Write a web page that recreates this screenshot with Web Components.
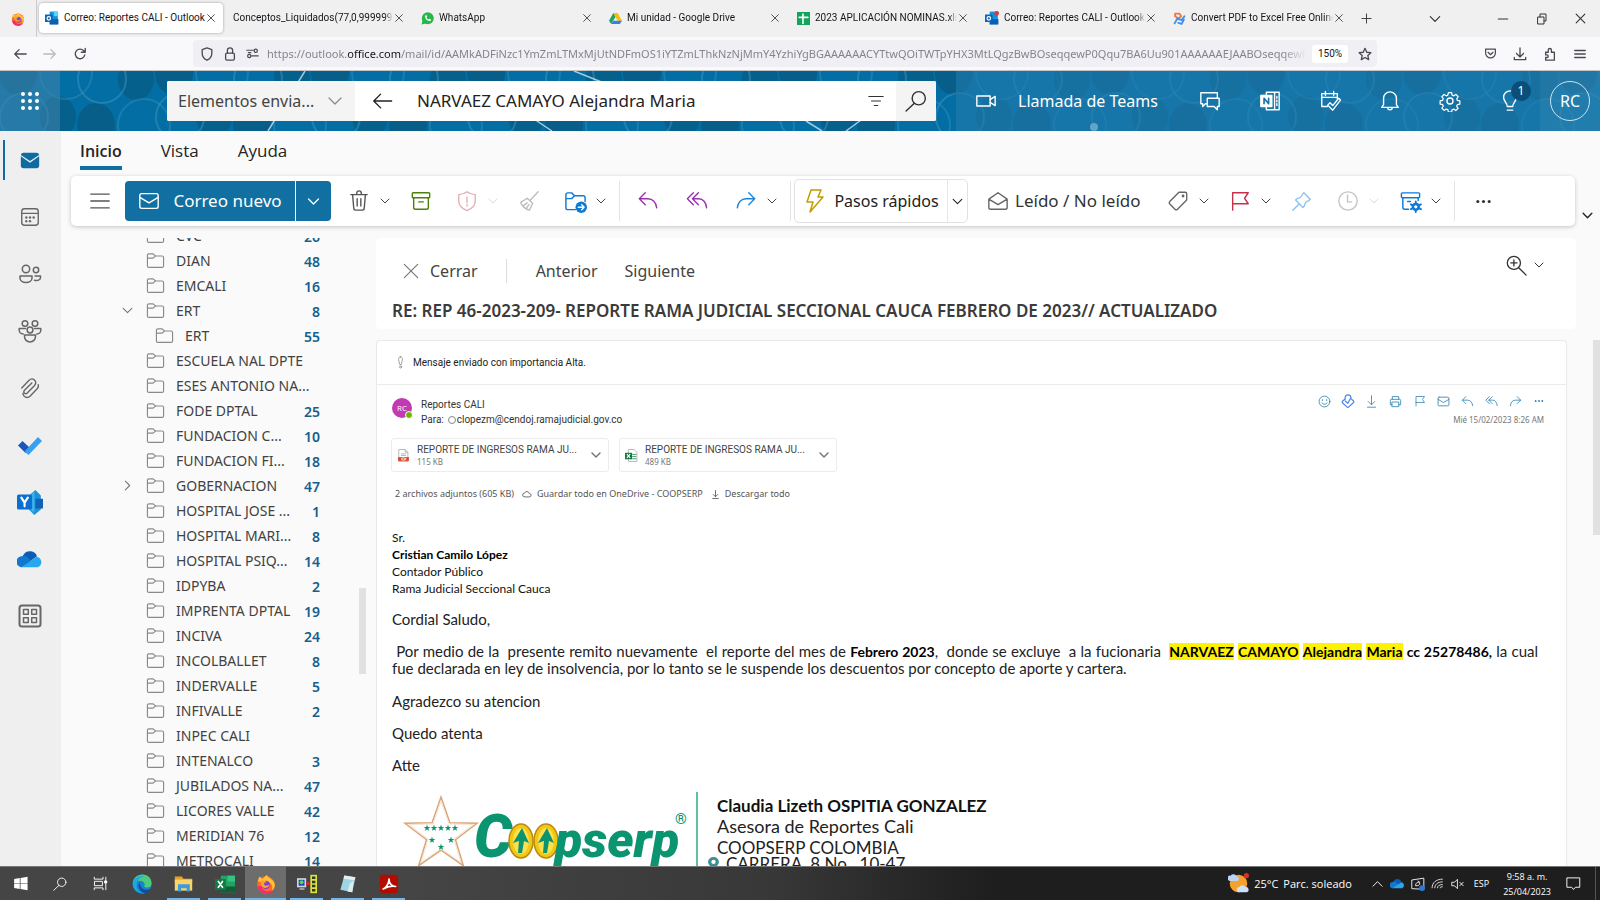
<!DOCTYPE html>
<html lang="es">
<head>
<meta charset="utf-8">
<title>Correo: Reportes CALI - Outlook</title>
<style>
  html, body { margin: 0; height: 100%; }
  body { font-family: "Noto Sans", "Open Sans", sans-serif; color: #242424; background: #fafafa; overflow: hidden; }
</style>
</head>
<body>
<desktop-shell>
  <browser-tabs slot="tabs"></browser-tabs>
  <browser-toolbar slot="toolbar"></browser-toolbar>
  <suite-header slot="header"></suite-header>
  <app-rail slot="rail"></app-rail>
  <ribbon-bar slot="ribbon"></ribbon-bar>
  <folder-tree slot="folders"></folder-tree>
  <reading-pane slot="reading">
    <mail-body></mail-body>
  </reading-pane>
  <task-bar slot="taskbar"></task-bar>
</desktop-shell>

<script>
const BASE = `*{box-sizing:border-box}
  button{font:inherit;color:inherit;background:none;border:0;padding:0;margin:0;display:flex;align-items:center;justify-content:center;flex:none}
  a{color:inherit;text-decoration:none}`;

function define(name, css, html) {
  const tpl = document.createElement('template');
  tpl.innerHTML = `<style>${BASE}${css}</style>${html}`;
  customElements.define(name, class extends HTMLElement {
    constructor() {
      super();
      this.attachShadow({ mode: 'open' }).append(tpl.content.cloneNode(true));
    }
  });
}

/* Icons: [viewBox, markup]. Strokes take the current colour. */
const ICONS = {
  close: ['0 0 12 12', '<path d="M2 2l8 8M10 2l-8 8"/>'],
  plus: ['0 0 12 12', '<path d="M6 1v10M1 6h10"/>'],
  down: ['0 0 12 12', '<path d="M2 4l4 4 4-4"/>'],
  right: ['0 0 12 12', '<path d="M4 2l4 4-4 4"/>'],
  up: ['0 0 12 12', '<path d="M1 9l5-5 5 5"/>'],
  min: ['0 0 12 12', '<path d="M2 6h8"/>'],
  restore: ['0 0 12 12', '<path d="M2 4h6v7H2zM4 4V1h6v7H8"/>'],
  back: ['0 0 16 16', '<path d="M15 8H2M7 3L2 8l5 5"/>'],
  fwdnav: ['0 0 16 16', '<path d="M1 8h13M9 3l5 5-5 5"/>'],
  reload: ['0 0 16 16', '<path d="M13.500 9a5.500 5.500 0 1 1-1.500-5l1.500 1.500M14 1.500v4.500h-4.500"/>'],
  shield: ['0 0 16 16', '<path d="M8 1l5.500 2v4c0 4-2.500 6.500-5.500 8-3-1.500-5.500-4-5.500-8V3z"/>'],
  lock: ['0 0 16 16', '<rect x="3" y="7" width="10" height="8" rx="1.500"/><path d="M5 7V4a3 3 0 0 1 6 0v3"/>'],
  perms: ['0 0 16 16', '<path d="M1 4h8M7 11h8M3 7h3"/><circle cx="12" cy="4.500" r="2"/><circle cx="4" cy="11" r="2"/>'],
  star: ['0 0 16 16', '<path d="M8 1.500l2 4.500 4.700.5-3.500 3.200 1 4.800L8 12l-4.200 2.500 1-4.800L1.300 6.500 6 6z"/>'],
  pocket: ['0 0 16 16', '<path d="M2 2.500h12v5a6 6 0 0 1-12 0zM5 6.500l3 3 3-3"/>'],
  download: ['0 0 16 16', '<path d="M8 1v10M4 7.500l4 4 4-4M1.500 12v2.500h13V12"/>'],
  downline: ['0 0 16 16', '<path d="M8 1v10.500M4 8l4 4 4-4M3 15h10"/>'],
  ext: ['0 0 16 16', '<path d="M3 6h3V3.500a1.800 1.800 0 0 1 3.600 0V6H13v9H3v-3h1.500a1.500 1.500 0 0 0 0-3H3z"/>'],
  menu: ['0 0 16 16', '<path d="M2 4h12M2 8h12M2 12h12"/>'],
  waffle: ['0 0 20 20', '<g fill="currentColor" stroke="none"><circle cx="3" cy="3" r="2"/><circle cx="10" cy="3" r="2"/><circle cx="17" cy="3" r="2"/><circle cx="3" cy="10" r="2"/><circle cx="10" cy="10" r="2"/><circle cx="17" cy="10" r="2"/><circle cx="3" cy="17" r="2"/><circle cx="10" cy="17" r="2"/><circle cx="17" cy="17" r="2"/></g>'],
  filter: ['0 0 20 20', '<path d="M2 5h16M5 10h10M8 15h4"/>'],
  search: ['0 0 20 20', '<circle cx="12.500" cy="7.500" r="6"/><path d="M8.500 12L1 19"/>'],
  video: ['0 0 24 24', '<rect x="2" y="6.500" width="14.500" height="11"/><path d="M16.500 10.500L22 7v10l-5.500-3.500"/>'],
  chats: ['0 0 24 24', '<path d="M9 15H7l-3 3v-3H2V3h18v6"/><path d="M9 9h13v9h-2v3.500L16.500 18H9z"/>'],
  onenote: ['0 0 24 24', '<path d="M8 6V2.500h14v19H8V18M17 2.500v19M19.500 7v2M19.500 11v2M19.500 15v2"/><rect x="2" y="6" width="12" height="12" fill="currentColor"/><path d="M5.500 15V9l5 6V9" stroke="#1c73a5" stroke-width="1.800"/>'],
  calcheck: ['0 0 24 24', '<path d="M9 18H3V4h17v6M3 8h17M7 1.500V6M16 1.500V6M9.500 16.500l2.500-2.500 3 3 6.500-8 2 2L15 22z"/>'],
  bell: ['0 0 24 24', '<path d="M3 19h18l-2-3V9a7 7 0 0 0-14 0v7zM9.500 19a2.500 2.500 0 0 0 5 0"/>'],
  gear: ['0 0 24 24', '<circle cx="12" cy="12" r="3.300"/><path d="M10 2h4l.6 3 2 .9 2.700-1.700 2.700 2.800-1.700 2.600.8 2 3 .6v3.900l-3 .5-.9 2 1.700 2.600-2.800 2.700-2.500-1.700-2 .8-.6 2.900h-4l-.6-3-2-.8-2.500 1.700-2.800-2.700 1.700-2.600-.9-2-3-.5v-3.900l3-.6.9-2L2 7l2.700-2.800L7.400 5.900l2-.9z" transform="translate(1.300 1.100) scale(.89)"/>'],
  bulb: ['0 0 24 24', '<path d="M9 18c0-4-4-5.500-4-10a7 7 0 0 1 14 0c0 4.500-4 6-4 10zM9 22h6"/>'],
  mailfill: ['0 0 24 24', '<path d="M2 8l10 7 10-7v10a3 3 0 0 1-3 3H5a3 3 0 0 1-3-3z" fill="currentColor" stroke="none"/><path d="M2 6.500A3 3 0 0 1 5 4h14a3 3 0 0 1 3 2.500L12 13z" fill="currentColor" stroke="none"/>'],
  mail: ['0 0 24 24', '<rect x="2" y="4" width="20" height="16" rx="2"/><path d="M2 8l10 6 10-6"/>'],
  mailopen: ['0 0 24 24', '<path d="M2 10l10-7 10 7v9a2 2 0 0 1-2 2H4a2 2 0 0 1-2-2zM2 10l10 6 10-6"/>'],
  calendar: ['0 0 24 24', '<rect x="3" y="3" width="18" height="18" rx="3"/><path d="M3 8h18"/><g fill="currentColor" stroke="none"><circle cx="8" cy="12.500" r="1.300"/><circle cx="12" cy="12.500" r="1.300"/><circle cx="16" cy="12.500" r="1.300"/><circle cx="8" cy="16.500" r="1.300"/><circle cx="12" cy="16.500" r="1.300"/></g>'],
  people: ['0 0 24 24', '<circle cx="8" cy="7" r="3.700"/><circle cx="18" cy="8" r="2.700"/><path d="M2 14h12v2c0 3-3 4.500-6 4.500S2 19 2 16zM17 14h5.500v1.500c0 2.500-3 3.500-6 2.800"/>'],
  group: ['0 0 24 24', '<circle cx="7" cy="4.500" r="2.800"/><circle cx="17" cy="4.500" r="2.800"/><circle cx="12" cy="11" r="2.900"/><path d="M6.500 16h11v1.500a5.500 5.500 0 0 1-11 0zM7.500 9.500H1.200V11c0 2 1.500 4 4 4M16.500 9.500h6.300V11c0 2-1.500 4-4 4"/>'],
  clip: ['0 0 24 24', '<path d="M3 12l8-8.500c4-3.800 9.500 1.500 6 5.700L9 17.500c-2 2-5-.5-3-3l8-8M21 8.500c.5 2-.2 3.300-1.200 4.400L12 21c-3 2.800-7.500.5-7.800-3"/>'],
  todo: ['0 0 24 24', '<g stroke="none"><path d="M0 12.500l4.500-4.500 7 6.500-4 5.500z" fill="#1a56be"/><path d="M6.500 18.500L20 4l4 4L10.500 22z" fill="#38a0f2"/></g>'],
  yammer: ['0 0 24 24', '<g stroke="none"><path d="M11 6l6-5 5 5v13l-6 5-5-5z" fill="#1b93d8"/><path d="M17 9h7v9h-7z" fill="#0f62b5"/><path d="M12 6l4-4v20l-4-3z" fill="#41b4ea"/><rect x="0" y="5" width="14" height="14" rx="1.500" fill="#0a6fd0"/></g><path d="M4 8l3 4.500L10 8M7 12.500V16" stroke="#fff" stroke-width="2"/>'],
  onedrive: ['0 0 24 24', '<g stroke="none"><path d="M6 8a7 7 0 0 1 12.500 1.500L12 14 3 13z" fill="#0a5cb4"/><path d="M5 9.500a5 5 0 0 1 5 1L16 16l-12 3.500A5 5 0 0 1 5 9.500z" fill="#1277cf"/><path d="M4 19.500L18 10a5 5 0 0 1 1.500 9.500z" fill="#2aa6ec"/></g>'],
  apps: ['0 0 24 24', '<rect x="1.500" y="1.500" width="21" height="21" rx="2.500" stroke-width="2"/><rect x="5.500" y="5.500" width="4.800" height="4.800"/><rect x="13.700" y="5.500" width="4.800" height="4.800"/><rect x="5.500" y="13.700" width="4.800" height="4.800"/><rect x="13.700" y="13.700" width="4.800" height="4.800"/>'],
  lines: ['0 0 24 24', '<path d="M2 4.500h20M2 12h20M2 19.500h20"/>'],
  trash: ['0 0 24 24', '<path d="M3 5h18M9.500 5V3.500a2.500 2.500 0 0 1 5 0V5M5 5l1.300 15a2 2 0 0 0 2 2h7.400a2 2 0 0 0 2-2L19 5M10 9.500v8M14 9.500v8"/>'],
  archive: ['0 0 24 24', '<rect x="2.500" y="3" width="19" height="5.500" rx="1"/><path d="M4 8.500V19a2 2 0 0 0 2 2h12a2 2 0 0 0 2-2V8.500M9.500 13h5"/>'],
  report: ['0 0 24 24', '<path d="M12 2c2.500 2 5.500 3 9 3v7c0 5-4 8.500-9 10.500C7 20.500 3 17 3 12V5c3.500 0 6.500-1 9-3zM12 7.500v6.500M12 16v1.500"/>'],
  broom: ['0 0 24 24', '<path d="M22 2l-8.500 9M10 9l6 5.500-3.500 7.500C8 21 3.500 17 3 13.500zM6 17l4-3M9 20l3-4"/>'],
  move: ['0 0 24 24', '<path d="M12 20.500H4a2 2 0 0 1-2-2V5a2 2 0 0 1 2-2h4l3 3h9a2 2 0 0 1 2 2v4M2 9h6l3-3"/><circle cx="18" cy="18" r="6" fill="currentColor" stroke="none"/><path d="M15 18h6M18.500 15.500L21 18l-2.500 2.500" stroke="#fff"/>'],
  reply: ['0 0 24 24', '<path d="M9 3L2.500 9.500 9 16M2.500 9.500H12c5 0 9 4 9.500 10"/>'],
  replyall: ['0 0 24 24', '<path d="M8 3L1.500 9.500 8 16M13.500 3L7 9.500l6.500 6.500M7 9.500h7c4.500 0 8 4 8.500 10"/>'],
  forward: ['0 0 24 24', '<path d="M15 3l6.500 6.500L15 16M21.500 9.500H12c-5 0-9 4-9.500 10"/>'],
  bolt: ['0 0 24 24', '<path d="M8 1h10l-3 7h5L7 23l3-10H4z"/>'],
  tag: ['0 0 24 24', '<path d="M13 2.500h7a1.500 1.500 0 0 1 1.500 1.500v7L11.500 21a2 2 0 0 1-2.800 0L3 15.300a2 2 0 0 1 0-2.800z"/><circle cx="17.500" cy="6.500" r=".8" fill="currentColor"/>'],
  flag: ['0 0 24 24', '<path d="M4 22V3h17l-4 6 4 6H4"/>'],
  pin: ['0 0 24 24', '<path d="M14 3l7 7-1.500 1.500c-4 1.500-4 2.500-5 6l-1.500 1.500-8-8 1.500-1.500c3.500-1 5-1.500 6-5zM8.500 15.500L2 22"/>'],
  clock: ['0 0 24 24', '<circle cx="12" cy="12" r="10"/><path d="M11.500 5.500V13H16"/>'],
  rules: ['0 0 24 24', '<rect x="2.500" y="3" width="19" height="5" rx="1"/><path d="M4 8v10a2 2 0 0 0 2 2h4M20 8v3M9 12h3"/><circle cx="17.500" cy="17.500" r="3" stroke-width="2.600"/><path d="M17.500 12v2M17.500 21v2M12.500 15l1.500 1M21 19l1.800 1M12.500 20l1.500-1M21 16l1.800-1" stroke-width="2"/>'],
  dots: ['0 0 24 24', '<g fill="currentColor" stroke="none"><circle cx="4" cy="12" r="2.200"/><circle cx="12" cy="12" r="2.200"/><circle cx="20" cy="12" r="2.200"/></g>'],
  zoomin: ['0 0 24 24', '<circle cx="9" cy="9" r="7.500"/><path d="M14.500 14.500L23 23M9 5.500v7M5.500 9h7"/>'],
  folder: ['0 0 20 20', '<path d="M1.500 4.500A1.500 1.500 0 0 1 3 3h4.500L10 5.300h7A1.500 1.500 0 0 1 18.500 6.800v9A1.500 1.500 0 0 1 17 17.300H3a1.500 1.500 0 0 1-1.500-1.500zM1.500 7.500h6L10 5.300"/>'],
  important: ['0 0 12 16', '<path d="M6 1c-4 0-2 5-1 9.500h2C8 6 10 1 6 1z"/><circle cx="6" cy="13.500" r="1.200"/>'],
  smile: ['0 0 24 24', '<circle cx="12" cy="12" r="10"/><path d="M8 8.500v2M16 8.500v2M7 14.500c2 3.500 8 3.500 10 0"/>'],
  loop: ['0 0 24 24', '<path d="M7 9.500V6.500a5 5 0 0 1 10 0l-5.500 9.500-4-4M7 8.500l-4.500 4a2 2 0 0 0 0 2.500l8 7.500a2 2 0 0 0 2.500 0l8.500-8a2 2 0 0 0 0-2.500L17 8"/>'],
  print: ['0 0 24 24', '<path d="M6 8V3h12v5M6 18H2.500V10a2 2 0 0 1 2-2h15a2 2 0 0 1 2 2v8H18"/><rect x="6" y="13" width="12" height="8.500"/>'],
  cloud: ['0 0 24 24', '<path d="M6 19a4.500 4.500 0 0 1 0-9 6 6 0 0 1 11.500 1A4 4 0 0 1 18 19z"/>'],
  pdf: ['0 0 24 24', '<path d="M4 1h11l5 5v17H4z" fill="#fff" stroke="#aaa"/><path d="M15 1v5h5M8 9h8M8 12h8" stroke="#aaa"/><path d="M2 15h20v7H2z" fill="#d8492b" stroke="none"/><ellipse cx="12" cy="18.500" rx="4" ry="2" stroke="#fff"/>'],
  xlsx: ['0 0 24 24', '<path d="M7 1h10l5 5v17H7z" fill="#fff" stroke="#aaa"/><path d="M14 10h6M14 14h6M14 18h6" stroke="#1f8a50"/><rect x="0" y="7" width="13" height="12" fill="#107c41" stroke="none"/><path d="M4 10l5 6M9 10l-5 6" stroke="#fff" stroke-width="2"/>'],
  outlook: ['0 0 24 24', '<g stroke="none"><path d="M8 1h14v22H8z" fill="#1490df"/><path d="M15 1h7v8h-7z" fill="#50d9ff"/><path d="M8 14h15v9H8z" fill="#0a5fae"/><rect x="0" y="6" width="13" height="13" rx="1" fill="#0f64b8"/></g><circle cx="6.500" cy="12.500" r="3" stroke="#fff" stroke-width="2"/>'],
  outlooknew: ['0 0 24 24', '<g stroke="none"><path d="M8 1h14v22H8z" fill="#1490df"/><path d="M8 14h15v9H8z" fill="#0a5fae"/><rect x="0" y="6" width="13" height="13" rx="1" fill="#0f64b8"/><circle cx="20" cy="4" r="4" fill="#e0353f"/></g><circle cx="6.500" cy="12.500" r="3" stroke="#fff" stroke-width="2"/>'],
  whatsapp: ['0 0 24 24', '<circle cx="12.500" cy="11.500" r="11" fill="#25b846" stroke="none"/><path d="M1 23l2-8 6 6z" fill="#25b846" stroke="none"/><path d="M7.500 7c0 6 4 10 10 10l1-3-3-1.500-1.500 1.500c-2-.8-3-2-4-4l1.500-1.500L10 5.500z" fill="#fff" stroke="none"/>'],
  drive: ['0 0 24 24', '<g stroke="none"><path d="M8 2h8l8 14h-8z" fill="#fbbc04"/><path d="M8 2l4 7L4 22l-4-6z" fill="#1fa463"/><path d="M8 16h16l-4 6H4z" fill="#3c7bec"/></g>'],
  sheets: ['0 0 24 24', '<rect x="0" y="0" width="24" height="24" fill="#12a35c" stroke="none"/><path d="M4 10h16M11 4v17" stroke="#fff" stroke-width="3"/>'],
  pdfconv: ['0 0 24 24', '<g stroke-width="3.500"><path d="M4 8V3h8l3 5-5 4-6-4" stroke="#f2763f"/><path d="M3 21l5-9 8 3 5-7M10 20l6 2 4-8" stroke="#4590e8"/></g>'],
  firefox: ['0 0 24 24', '<g stroke="none"><circle cx="12" cy="13" r="10.500" fill="#ff6a2b"/><path d="M2 9l2-6 4 3 5-5c1 4 8 5 9.500 11a10 10 0 0 1-4 9c3-6 0-10-4-11z" fill="#ffc42e"/><path d="M2 15a10 10 0 0 0 19 3c-3 4-14 4-14-4z" fill="#f0306b"/><circle cx="12" cy="13" r="5" fill="#7b3ee0"/><path d="M5 9c3-3 6-1 8 1-3 0-4 1-3 3s5 1 6-1c1 5-8 7-10 1z" fill="#ffa02b"/></g>'],
  windows: ['0 0 24 24', '<path d="M3 5.500l8-1.200V11.500H3zM12 4.200L22 2.500v9H12zM3 12.500h8v7.200l-8-1.200zM12 12.500h10v9l-10-1.700z" fill="#fff" stroke="none"/>'],
  taskview: ['0 0 24 24', '<path d="M2 2v3h14V2M3 8.500h12v7H3zM2 22v-3h14v3M20.500 2v20"/><path d="M19 8h3v3h-3z" fill="currentColor"/>'],
  edge: ['0 0 24 24', '<g stroke="none"><circle cx="12" cy="12" r="11.500" fill="#1b7fd4"/><path d="M1 10C3-3 24-3 23.500 12c-.5 5-7 5-9 3 2-3 0-7-5-7-4 0-7 1-8.500 2z" fill="#4ccb7c"/><path d="M1 10c2-6 9-9 15-7-5 0-9 3-10 8-2 6 3 13 10 12A12 12 0 0 1 1 10z" fill="#1ea9dc"/><path d="M9 10c-3 4 0 12 7 13 3-1 5-3 6-5-4 2-10 1-12-4z" fill="#0d4f9c"/></g>'],
  explorer: ['0 0 24 24', '<g stroke="none"><path d="M1 3h9l2 3h11v5H1z" fill="#e6a023"/><path d="M1 7h22v14H1z" fill="#fbd469"/><path d="M5 13h15v9h-4v-4H9v4H5z" fill="#3b9be0"/></g>'],
  excel: ['0 0 24 24', '<g stroke="none"><path d="M7 2h17v20H7z" fill="#21a366"/><path d="M15 2h9v7h-9z" fill="#33c481"/><path d="M7 15h17v7H7z" fill="#185c37"/><rect x="0" y="6" width="13" height="13" fill="#107c41"/></g><path d="M4 9l5 7M9 9l-5 7" stroke="#fff" stroke-width="2"/>'],
  transfer: ['0 0 24 24', '<g stroke="none"><rect x="0" y="5" width="11" height="11" fill="#d6d6d6"/><rect x="2" y="7" width="7" height="7" fill="#1b33c8"/><circle cx="5.500" cy="10" r="2.500" fill="#3ee04a"/><rect x="3" y="17" width="6" height="2" fill="#aaa"/><path d="M11 10h4v3h-4z" fill="#e22"/><rect x="16" y="1" width="8" height="22" fill="#dfe23c"/><path d="M18 3h4v3h-4zM18 8h4v3h-4zM18 13h4v3h-4zM18 18h4v3h-4z" fill="#2b3b14"/></g>'],
  notepad: ['0 0 24 24', '<g stroke="none"><path d="M8 2l14 2-4 19L3 20z" fill="#9ed4e3"/><path d="M8 2l14 2-1 4L7 6z" fill="#e4eef1"/><path d="M15 12l5-4-2 15-6-1z" fill="#dcebf0"/></g>'],
  acrobat: ['0 0 24 24', '<rect x="1" y="1" width="22" height="22" rx="4" fill="#b30b00" stroke="none"/><path d="M5 18c3-1 7-6 7-12 0 6 4 9 8 9-5-1-10 0-15 3z" stroke="#fff" stroke-width="2"/>'],
  weather: ['0 0 24 24', '<g stroke="none"><circle cx="12" cy="12" r="10" fill="#f5a22d"/><path d="M2 9a3 3 0 0 1 1-6 4 4 0 0 1 7 1 2.500 2.500 0 0 1 0 5z" fill="#bcd3f5"/><path d="M13 22a3 3 0 0 1 0-6 4 4 0 0 1 7 0 3 3 0 0 1 1 6z" fill="#cfdff8"/><circle cx="21" cy="3" r="3" fill="#d0332b"/></g>'],
  sync: ['0 0 24 24', '<path d="M2 5l20-3v19L2 20zM8 15c-1-4 2-6 7-6l-3-2M15 11c0 3-2 4-6 4"/><circle cx="19" cy="19" r="5" fill="#2d7ad6" stroke="none"/>'],
  wifi: ['0 0 24 24', '<path d="M2 20C2 10 10 4 21 4M7 20c0-6 5-11 14-11M12 20c0-4 3-6 9-6M17 20c0-2 2-2 4-2"/>'],
  mute: ['0 0 24 24', '<path d="M2 9h4l5-5v16l-5-5H2zM15 9l6 6M21 9l-6 6"/>'],
  note: ['0 0 24 24', '<path d="M2 3h20v15h-7l-3 3.500L9 18H2z"/>'],
  place: ['0 0 24 24', '<path d="M12 24C6 17 2 13 2 9a10 9 0 0 1 20 0c0 4-4 8-10 15z" fill="#3b8f95" stroke="none"/><circle cx="12" cy="9" r="4" fill="#fff" stroke="none"/>']
};

class UiIcon extends HTMLElement {
  constructor() { super(); this.attachShadow({ mode: 'open' }); }
  connectedCallback() {
    const [box, art] = ICONS[this.getAttribute('name')];
    const size = this.getAttribute('size') || 24;
    const sw = this.getAttribute('weight') || 1.5;
    this.shadowRoot.innerHTML = `<style>:host{display:block;flex:none;width:${size}px;height:${size}px}svg{display:block;width:100%;height:100%}</style><svg viewBox="${box}" fill="none" stroke="currentColor" stroke-width="${sw}" stroke-linejoin="round" stroke-linecap="round" aria-hidden="true">${art}</svg>`;
  }
}
customElements.define('ui-icon', UiIcon);

const ic = (name, size, weight) => `<ui-icon name="${name}" size="${size}"${weight ? ` weight="${weight}"` : ''}></ui-icon>`;

/* Browser chrome */
define('browser-tab', `
  :host{display:flex;flex:0 1 188px;min-width:0;padding:3px 2px 4px}
  .tab{display:flex;align-items:center;flex:1;min-width:0;border-radius:4px;padding:0 6px}
  :host([active]) .tab{background:#fff;box-shadow:0 0 3px rgba(0,0,0,.35)}
  button.pick{flex:1;min-width:0;gap:5px;justify-content:flex-start;height:100%;overflow:hidden;
    -webkit-mask-image:linear-gradient(90deg,#000 calc(100% - 8px),transparent);mask-image:linear-gradient(90deg,#000 calc(100% - 8px),transparent)}
  :host([active]) button.pick{-webkit-mask-image:none;mask-image:none}
  .label{white-space:nowrap;font:10px/14px Roboto,sans-serif;color:#15141a}
  .close{width:12px}`,
  `<div class="tab"><button class="pick" role="tab"><slot name="icon"></slot><span class="label"><slot></slot></span></button><button class="close" aria-label="Cerrar pestaña">${ic('close', 10, 1)}</button></div>`);

define('browser-tabs', `
  :host{display:flex;height:37px;background:#f0f0f0;color:#333;align-items:stretch}
  .app{width:37px;display:flex;align-items:center;justify-content:center;border-right:1px solid #ccc}
  .tabs{display:flex;flex:1;min-width:0}
  .ctl{display:flex}.ctl button{width:39px}
  .new{width:26px}.all{width:40px;margin-right:29px}`,
  `<div class="app">${ic('firefox', 14)}</div>
  <div class="tabs" role="tablist">
    <browser-tab active><ui-icon slot="icon" name="outlook" size="14"></ui-icon>Correo: Reportes CALI - Outlook</browser-tab>
    <browser-tab>Conceptos_Liquidados(77,0,9999999999)</browser-tab>
    <browser-tab><ui-icon slot="icon" name="whatsapp" size="13"></ui-icon>WhatsApp</browser-tab>
    <browser-tab><ui-icon slot="icon" name="drive" size="13"></ui-icon>Mi unidad - Google Drive</browser-tab>
    <browser-tab><ui-icon slot="icon" name="sheets" size="13"></ui-icon>2023 APLICACIÓN NOMINAS.xlsx</browser-tab>
    <browser-tab><ui-icon slot="icon" name="outlooknew" size="14"></ui-icon>Correo: Reportes CALI - Outlook</browser-tab>
    <browser-tab><ui-icon slot="icon" name="pdfconv" size="13"></ui-icon>Convert PDF to Excel Free Online</browser-tab>
    <button class="new" aria-label="Nueva pestaña">${ic('plus', 11, 1)}</button>
  </div>
  <div class="ctl"><button class="all" aria-label="Pestañas">${ic('down', 14, 1)}</button><button aria-label="Minimizar">${ic('min', 14, 1)}</button><button aria-label="Restaurar">${ic('restore', 12, 1)}</button><button aria-label="Cerrar">${ic('close', 13, 1)}</button></div>`);

define('browser-toolbar', `
  :host{display:flex;align-items:center;height:33px;background:#f9f9fb;border-bottom:1px solid #c4c4c8;color:#4a4a52;padding-right:5px}
  .nav{display:flex;padding-left:5px;width:193px}.nav button{width:30px}
  .nav .off{color:#b9b9be}
  .url{flex:1;min-width:0;height:27px;background:#f0f0f4;border-radius:4px;display:flex;align-items:center;padding:0 1px 0 2px}
  .url button{width:23px}
  .text{flex:1;min-width:0;margin-left:3px;font:11px/16px "Noto Sans",sans-serif;color:#84848c;white-space:nowrap;overflow:hidden;
    -webkit-mask-image:linear-gradient(90deg,#000 calc(100% - 24px),transparent);mask-image:linear-gradient(90deg,#000 calc(100% - 24px),transparent)}
  .text b{font-weight:400;color:#15141a}
  .url .zoom{width:36px;height:18px;background:#fff;border-radius:3px;margin:0 5px 0 6px;font:10px/18px Roboto,sans-serif;color:#15141a}
  .tools{display:flex;margin-left:98px}.tools button{width:30px}`,
  `<div class="nav"><button aria-label="Atrás">${ic('back', 14)}</button><button class="off" aria-label="Adelante">${ic('fwdnav', 14)}</button><button aria-label="Recargar">${ic('reload', 14)}</button></div>
  <div class="url"><button aria-label="Protección">${ic('shield', 14)}</button><button aria-label="Conexión segura">${ic('lock', 14)}</button><button aria-label="Permisos">${ic('perms', 13)}</button>
  <div class="text" role="textbox" aria-label="Dirección">https://outlook.<b>office.com</b>/mail/id/AAMkADFiNzc1YmZmLTMxMjUtNDFmOS1iYTZmLThkNzNjMmY4YzhiYgBGAAAAAACYTtwQOiTWTpYHX3MtLQgzBwBOseqqewP0Qqu7BA6Uu901AAAAAAEJAABOseqqewP0Qqu7BA6Uu901</div>
  <button class="zoom">150%</button><button aria-label="Marcador">${ic('star', 14)}</button></div>
  <div class="tools"><button aria-label="Pocket">${ic('pocket', 13)}</button><button aria-label="Descargas">${ic('download', 14)}</button><button aria-label="Extensiones">${ic('ext', 14)}</button><button aria-label="Menú">${ic('menu', 14)}</button></div>`);

/* Outlook top bar */
const rings = (() => {
  let s = '';
  for (let i = 0; i < 21; i++) {
    const x = i * 78, a = i % 2 ? 8 : 46, b = i % 2 ? 54 : 2;
    s += `<ellipse cx="${x + 18}" cy="${b}" rx="19" ry="22" fill="#075a82" opacity=".8"/><ellipse cx="${x + 58}" cy="${a}" rx="18" ry="21" fill="#075a82" opacity=".7"/>
      <circle cx="${x + 24}" cy="${a}" r="24" stroke="#3f93c0" opacity=".5" fill="none" stroke-width="2"/><circle cx="${x + 66}" cy="${b}" r="26" stroke="#3f93c0" opacity=".4" fill="none" stroke-width="2"/>`;
  }
  return s;
})();
define('suite-header', `
  :host{display:flex;height:60px;position:relative;background:#036ea3;color:#fff;font-size:16px;overflow:hidden}
  .art{position:absolute;inset:0;width:100%;height:100%}
  .waffle,.search,.actions{position:relative}
  .waffle{width:60px;background:rgba(60,130,170,.6)}
  .search{display:flex;flex:1;max-width:769px;height:40px;margin:10px 20px 0 107px;background:#fff;color:#333;border-radius:2px;overflow:hidden}
  .scope{width:188px;background:#f4f4f4;padding:0 11px;justify-content:space-between;color:#444}
  .scope ui-icon{color:#888}
  .back{width:54px;color:#222}
  input{flex:1;min-width:0;border:0;outline:0;background:none;padding:0 0 0 8px;font:17px/24px "Noto Sans",sans-serif;color:#222}
  .filter{width:40px}.go{width:40px;background:#f4f4f4}
  .actions{display:flex;background:rgba(34,122,172,.62);margin-left:auto}
  .actions button{width:60px}
  .actions .call{width:224px;justify-content:flex-start;padding-left:19px;gap:21px}
  .tips{position:relative}
  .badge{position:absolute;left:31px;top:10px;width:20px;height:20px;border-radius:50%;background:#0b4f78;font-size:12px;line-height:20px}
  .actions .me{background:rgba(255,255,255,.05)}
  .me span{width:40px;height:40px;border:1px solid #cfe3ee;border-radius:50%;font-size:16px;line-height:38px}`,
  `<svg class="art" viewBox="0 0 1600 60" preserveAspectRatio="xMidYMid slice" aria-hidden="true">${rings}<g stroke="#cfe3ee" stroke-width="1.500" opacity=".8"><path d="M305 0L268 60M574 0L604 12M528 44L552 60M822 60L806 50M846 60L868 44"/></g><circle cx="1094" cy="56" r="4" fill="#cfe3ee"/></svg>
  <button class="waffle" aria-label="Iniciador de aplicaciones">${ic('waffle', 20)}</button>
  <div class="search"><button class="scope">Elementos envia...${ic('down', 18, 0.8)}</button><button class="back" aria-label="Volver">${ic('back', 22, 1)}</button>
  <input type="text" aria-label="Buscar" value="NARVAEZ CAMAYO Alejandra Maria"><button class="filter" aria-label="Filtrar">${ic('filter', 18, 1.3)}</button><button class="go" aria-label="Buscar">${ic('search', 22, 1.3)}</button></div>
  <div class="actions"><button class="call">${ic('video', 22)}Llamada de Teams</button><button aria-label="Chat">${ic('chats', 22)}</button><button aria-label="OneNote">${ic('onenote', 22)}</button><button aria-label="Mi día">${ic('calcheck', 22)}</button><button aria-label="Notificaciones">${ic('bell', 22)}</button><button aria-label="Configuración">${ic('gear', 22)}</button>
  <button class="tips" aria-label="Sugerencias">${ic('bulb', 22)}<span class="badge">1</span></button><button class="me"><span>RC</span></button></div>`);

/* Left app rail */
define('app-rail', `
  :host{display:block;background:#efefef;color:#666;width:61px}
  nav{display:flex;flex-direction:column;width:60px}
  a{height:57px;display:flex;align-items:center;justify-content:center;position:relative}
  .on{color:#0f6ca0}
  .on::before{content:"";position:absolute;left:3px;top:9px;width:2px;height:40px;background:#0f6ca0}`,
  `<nav aria-label="Aplicaciones"><a class="on" href="#" aria-label="Correo">${ic('mailfill', 22)}</a><a href="#" aria-label="Calendario">${ic('calendar', 22)}</a><a href="#" aria-label="Contactos">${ic('people', 24)}</a><a href="#" aria-label="Grupos">${ic('group', 24)}</a><a href="#" aria-label="Archivos">${ic('clip', 22)}</a><a href="#" aria-label="To Do">${ic('todo', 24)}</a><a href="#" aria-label="Yammer">${ic('yammer', 26)}</a><a href="#" aria-label="OneDrive">${ic('onedrive', 26)}</a><a href="#" aria-label="Más aplicaciones">${ic('apps', 24)}</a></nav>`);

/* Ribbon */
define('ribbon-button', `
  :host{display:flex;align-items:center;flex:none}
  button{height:40px}.main{width:36px}.more{width:16px;color:#444}
  :host(:not([menu])) .more{display:none}
  :host([off]) .more{color:#ddd}`,
  `<button class="main"><slot></slot></button><button class="more" aria-label="Más opciones">${ic('down', 12, 1)}</button>`);

define('ribbon-bar', `
  :host{display:block;padding:0 25px 12px 10px;font-size:16px}
  .tabs{display:flex;gap:39px;padding-left:9px;height:45px}
  .tabs button{font:17px/24px "Open Sans",sans-serif;align-items:flex-start;height:39px;padding-top:8px}
  .tabs .on{font-weight:600;font-size:16px;border-bottom:4px solid #116fa1}
  .row{position:relative}
  .bar{display:flex;align-items:center;height:50px;gap:10px;background:#fff;border-radius:5px;box-shadow:0 1px 4px rgba(0,0,0,.22);padding-left:4px;color:#555}
  .nav{width:50px;margin-right:-10px}
  .new{display:flex;gap:1px;color:#fff}
  .new button{height:40px;background:#116fa1;font:17px/24px "Noto Sans",sans-serif}
  .new .a{width:170px;gap:13px;border-radius:4px 0 0 4px}.new .b{width:35px;border-radius:0 4px 4px 0}
  .sep{width:1px;height:40px;background:#e4e4e4}
  .group{display:flex;gap:13px}
  .quick{display:flex;height:44px;border:1px solid #e2e2e2;border-radius:5px;color:#222;width:174px;margin-left:-7px}
  .quick .a{flex:1;gap:7px}.quick .b{width:20px;border-left:1px solid #e6e6e6}
  .read{font:17px/24px "Noto Sans",sans-serif;color:#333;gap:6px;width:172px;justify-content:flex-start;padding-left:9px;height:40px}
  .read ui-icon{color:#666}
  .fold{position:absolute;right:-19px;bottom:4px}`,
  `<div class="tabs" role="tablist"><button class="on" role="tab">Inicio</button><button role="tab">Vista</button><button role="tab">Ayuda</button></div>
  <div class="row"><div class="bar">
    <button class="nav" aria-label="Panel de navegación">${ic('lines', 22)}</button>
    <div class="new"><button class="a">${ic('mail', 22)}Correo nuevo</button><button class="b" aria-label="Más">${ic('down', 15, 1)}</button></div>
    <ribbon-button menu style="color:#555">${ic('trash', 22)}</ribbon-button>
    <ribbon-button style="color:#498205">${ic('archive', 22)}</ribbon-button>
    <ribbon-button menu off style="color:#e3b0b4">${ic('report', 22)}</ribbon-button>
    <ribbon-button style="color:#bdbdbd">${ic('broom', 22)}</ribbon-button>
    <ribbon-button menu style="color:#0f7ad6">${ic('move', 23)}</ribbon-button>
    <span class="sep"></span>
    <div class="group"><ribbon-button style="color:#9b2fae">${ic('reply', 22)}</ribbon-button><ribbon-button style="color:#9b2fae">${ic('replyall', 22)}</ribbon-button><ribbon-button menu style="color:#1a86dc">${ic('forward', 22)}</ribbon-button></div>
    <span class="sep"></span>
    <div class="quick"><button class="a"><ui-icon name="bolt" size="24" style="color:#c19c00"></ui-icon>Pasos rápidos</button><button class="b" aria-label="Más">${ic('down', 13, 1)}</button></div>
    <button class="read">${ic('mailopen', 22)}Leído / No leído</button>
    <ribbon-button menu style="color:#666">${ic('tag', 22)}</ribbon-button>
    <ribbon-button menu style="color:#c4314b">${ic('flag', 22)}</ribbon-button>
    <ribbon-button style="color:#8cc1ef">${ic('pin', 22)}</ribbon-button>
    <ribbon-button menu off style="color:#c4c4c4">${ic('clock', 22)}</ribbon-button>
    <ribbon-button menu style="color:#0f7ad6">${ic('rules', 23)}</ribbon-button>
    <span class="sep"></span>
    <ribbon-button style="color:#333">${ic('dots', 17)}</ribbon-button>
  </div><button class="fold" aria-label="Contraer cinta">${ic('down', 13, 1.3)}</button></div>`);

/* Folder list */
const FOLDERS = [['CVC', 26], ['DIAN', 48], ['EMCALI', 16], ['ERT', 8, 'down'], ['ERT', 55, '', 1], ['ESCUELA NAL DPTE'], ['ESES ANTONIO NA...'], ['FODE DPTAL', 25], ['FUNDACION C...', 10], ['FUNDACION FI...', 18], ['GOBERNACION', 47, 'right'], ['HOSPITAL JOSE ...', 1], ['HOSPITAL MARI...', 8], ['HOSPITAL PSIQ...', 14], ['IDPYBA', 2], ['IMPRENTA DPTAL', 19], ['INCIVA', 24], ['INCOLBALLET', 8], ['INDERVALLE', 5], ['INFIVALLE', 2], ['INPEC CALI'], ['INTENALCO', 3], ['JUBILADOS NA...', 47], ['LICORES VALLE', 42], ['MERIDIAN 76', 12], ['METROCALI', 14]];

define('folder-row', `
  :host{display:flex;align-items:center;height:25px;padding:0 56px 0 60px;color:#424242}
  .twist{width:14px;margin-right:11px;color:#777}
  .ico{color:#8a8a8a;margin-right:11px;flex:none}
  :host([nested]) .ico{margin-left:9px}
  .name{flex:1;white-space:nowrap;font:14px/24px "Noto Sans",sans-serif}
  .count{font:600 14px/24px "Noto Sans",sans-serif;color:#175e8c;padding-top:3px}`,
  `<span class="twist"><slot name="twist"></slot></span><span class="ico">${ic('folder', 19, 1.2)}</span><span class="name"><slot></slot></span><span class="count"><slot name="count"></slot></span>`);

define('folder-tree', `
  :host{display:block;overflow:hidden;position:relative}
  .list{margin-top:-15px}
  .thumb{position:absolute;right:10px;top:350px;width:7px;height:86px;background:#e1e1e1}`,
  `<div class="list" role="tree">${FOLDERS.map(([n, c, t, d]) => `<folder-row role="treeitem"${d ? ' nested' : ''}>${t ? `<ui-icon slot="twist" name="${t}" size="13" weight="1"></ui-icon>` : ''}${n}${c ? `<span slot="count">${c}</span>` : ''}</folder-row>`).join('')}</div><div class="thumb"></div>`);

/* Reading pane */
define('attachment-card', `
  :host{display:flex;align-items:center;width:218px;height:34px;border:1px solid #ececec;border-radius:3px;padding:0 6px 0 5px;background:#fff}
  .t{flex:1;min-width:0;margin-left:7px;font:10px/13px Roboto,sans-serif;color:#444;white-space:nowrap}
  small{display:block;font:8px/11px "Noto Sans",sans-serif;color:#777}
  button{color:#777}`,
  `<slot name="icon"></slot><div class="t"><slot></slot><small><slot name="size"></slot></small></div><button aria-label="Más acciones">${ic('down', 12, 1.5)}</button>`);

define('reading-pane', `
  :host{display:flex;flex-direction:column;gap:11px;position:relative;overflow:hidden}
  .head{background:#fff;border-radius:5px;height:91px;padding:13px 29px 0 16px;margin-right:24px;flex:none}
  .cmds{display:flex;align-items:center;height:40px;font:16px/24px "Noto Sans",sans-serif;color:#444;padding-left:9px}
  .cmds button{gap:9px}
  .cmds ui-icon{color:#777}
  .cmds i{width:1px;height:24px;background:#ddd;margin:0 29px 0 28px}
  .cmds .next{margin-left:27px}
  .cmds .zoom{margin:-12px 2px 0 auto;gap:6px}
  .cmds .zoom ui-icon{color:#333}
  h1{margin:8px 0 0;font:600 17px/24px "Noto Sans",sans-serif;color:#3b3b3b;white-space:nowrap}
  .msg{flex:1;background:#fff;border:1px solid #eaeaea;border-bottom:0;border-radius:4px 4px 0 0;margin-right:33px}
  .imp{display:flex;align-items:center;height:44px;border-bottom:1px solid #ebebeb;padding-left:17px;gap:6px;font:10px/14px Roboto,sans-serif;color:#222}
  .imp ui-icon{color:#888}
  .from{display:flex;padding:12px 22px 0 15px;font:10px/15px Roboto,sans-serif;color:#333}
  .av{position:relative;width:20px;height:20px;border-radius:50%;background:#c239b3;color:#fff;text-align:center;font:8px/20px "Open Sans",sans-serif;margin:1px 9px 0 0}
  .av::after{content:"";position:absolute;right:-1px;bottom:-1px;width:6px;height:6px;border-radius:50%;background:#6bb700;border:1px solid #fff}
  .to{display:flex;align-items:center;gap:1px}
  .to i{width:8px;height:8px;border:1px solid #888;border-radius:50%;margin-left:3px}
  .right{margin:-4px 0 0 auto;text-align:right}
  .acts{display:flex;justify-content:space-between;width:237px;color:#2b7fb0;margin:0 -6px 0 auto}.acts button{width:22px;height:16px}
  .acts .loop{color:#4a83e8}
  time{display:block;font:8px/14px "Noto Sans",sans-serif;color:#777;margin-top:4px}
  .files{display:flex;gap:10px;padding:11px 14px 0}
  .all{display:flex;align-items:center;padding:14px 18px 0;font:9px/16px "Noto Sans",sans-serif;color:#555}
  .all a{display:flex;align-items:center;gap:5px;margin-left:8px}
  .thumb{position:absolute;right:0;top:102px;width:7px;height:195px;background:#e1e1e1}`,
  `<section class="head"><div class="cmds"><button>${ic('close', 20, 0.7)}Cerrar</button><i></i><button>Anterior</button><button class="next">Siguiente</button><button class="zoom" aria-label="Zoom">${ic('zoomin', 21)}${ic('down', 12, 1)}</button></div>
  <h1>RE: REP 46-2023-209- REPORTE RAMA JUDICIAL SECCIONAL CAUCA FEBRERO DE 2023// ACTUALIZADO</h1></section>
  <article class="msg"><div class="imp">${ic('important', 13, 1)}Mensaje enviado con importancia Alta.</div>
  <div class="from"><div class="av">RC</div><div><div>Reportes CALI</div><div class="to">Para: <i></i><a href="mailto:clopezm@cendoj.ramajudicial.gov.co">clopezm@cendoj.ramajudicial.gov.co</a></div></div>
  <div class="right"><div class="acts"><button aria-label="Reaccionar">${ic('smile', 13)}</button><button class="loop" aria-label="Viva">${ic('loop', 14, 2)}</button><button aria-label="Descargar">${ic('downline', 13, 1)}</button><button aria-label="Imprimir">${ic('print', 13)}</button><button aria-label="Marcar">${ic('flag', 12)}</button><button aria-label="No leído">${ic('mail', 13)}</button><button aria-label="Responder">${ic('reply', 13)}</button><button aria-label="Responder a todos">${ic('replyall', 13)}</button><button aria-label="Reenviar">${ic('forward', 13)}</button><button aria-label="Más">${ic('dots', 10)}</button></div><time>Mié 15/02/2023 8:26 AM</time></div></div>
  <div class="files"><attachment-card><ui-icon slot="icon" name="pdf" size="13"></ui-icon>REPORTE DE INGRESOS RAMA JU...<span slot="size">115 KB</span></attachment-card><attachment-card><ui-icon slot="icon" name="xlsx" size="13"></ui-icon>REPORTE DE INGRESOS RAMA JU...<span slot="size">489 KB</span></attachment-card></div>
  <div class="all">2 archivos adjuntos (605 KB)<a href="#">${ic('cloud', 10, 2)}Guardar todo en OneDrive - COOPSERP</a><a href="#">${ic('downline', 9)}Descargar todo</a></div>
  <slot></slot></article><div class="thumb"></div>`);

const starPts = (cx, cy, r, k = .4) => Array.from({ length: 10 }, (_, i) => {
  const q = i % 2 ? r * k : r, a = -Math.PI / 2 + i * Math.PI / 5;
  return (cx + q * Math.cos(a)).toFixed(1) + ',' + (cy + q * Math.sin(a)).toFixed(1);
}).join(' ');
const coin = x => `<ellipse cx="${x}" cy="49" rx="12" ry="17" fill="#f3c713" stroke="#b98a12" stroke-width="1.500"/><ellipse cx="${x}" cy="49" rx="8" ry="13" fill="#fbe04f"/><path d="M${x + 1} 36l7 15-5-2-2 12h-4l1-12-6 2z" fill="#0b9470"/>`;

define('coop-logo', `
  :host{display:block;width:292px;height:90px}
  svg{display:block;overflow:visible}
  text{font-family:Roboto,sans-serif;font-style:italic;font-weight:900;fill:#0b9470}`,
  `<svg width="292" height="90" viewBox="0 0 292 90" role="img" aria-label="Coopserp">
  <polygon points="${starPts(49, 43, 38)}" fill="#fff" stroke="#d9a777" stroke-width="1.500"/><polygon points="${starPts(49, 43, 34)}" fill="none" stroke="#f3e3d3"/>
  ${[[35, 36], [42, 36], [49, 36], [56, 36], [63, 36], [40, 48], [59, 48], [49, 55]].map(p => `<polygon points="${starPts(p[0], p[1], 3.5)}" fill="#0b9470"/>`).join('')}
  <text x="82" y="65" font-size="60">C</text>${coin(129)}${coin(154)}<text x="163" y="65" font-size="50">pserp</text><text x="283" y="32" font-size="15" style="font-style:normal;font-weight:500">®</text></svg>`);

define('mail-body', `
  :host{display:block;padding:27px 28px 0 15px;color:#222;font:15px/16px Lato,sans-serif}
  address{font:normal 12px/17px Lato,sans-serif;color:#111;margin-bottom:14px}
  p{margin:0 0 16px}
  .j{text-align:justify;margin-bottom:17px}
  b{color:#000}
  .j b,mark{font-size:14px}
  mark{background:#fff200;color:#000;font-weight:700}
  .sign{display:flex;height:90px;margin-top:19px}
  .who{border-left:2px solid #5fc0a5;margin-left:12px;padding:3px 0 0 19px;font-size:18px;line-height:21px;white-space:nowrap}
  .who .n{font-weight:700;font-size:17px;color:#111}
  .who .co{font-size:17px}
  .who .ad{display:flex;align-items:center;font-size:17px;gap:6px;margin:-5px 0 0 -10px}`,
  `<address>Sr.<br><b>Cristian Camilo López</b><br>Contador Público<br>Rama Judicial Seccional Cauca</address>
  <p>Cordial Saludo,</p>
  <p class="j">&nbsp;Por medio de la&nbsp; presente remito nuevamente&nbsp; el reporte del mes de <b>Febrero 2023</b>,&nbsp; donde se excluye&nbsp; a la fucionaria&nbsp; <mark>NARVAEZ</mark> <mark>CAMAYO</mark> <mark>Alejandra</mark> <mark>Maria</mark> <b>cc 25278486,</b> la cual fue declarada en ley de insolvencia, por lo tanto se le suspende los descuentos por concepto de aporte y cartera.</p>
  <p>Agradezco su atencion</p><p>Quedo atenta</p><p>Atte</p>
  <div class="sign"><coop-logo></coop-logo><div class="who"><div class="n">Claudia Lizeth OSPITIA GONZALEZ</div><div>Asesora de Reportes Cali</div><div class="co">COOPSERP COLOMBIA</div><div class="ad">${ic('place', 13)}CARRERA&nbsp; 8 No.&nbsp; 10-47</div></div></div>`);

/* Windows taskbar */
define('task-bar', `
  :host{display:flex;align-items:stretch;height:33px;background:linear-gradient(90deg,#454545 25%,#383838 48%,#1e1e1e 62%);border-top:1px solid #777;color:#fff;font:11px/16px "Open Sans",sans-serif}
  .apps{display:flex;flex:1}
  .apps button{width:41px;position:relative}
  .apps .s{width:40px}
  .apps .edge{width:43px}
  .run::after{content:"";position:absolute;left:4px;right:4px;bottom:0;height:2px;background:#76b5ea}
  .apps .on{background:#6d6d6d}.on.run::after{left:0;right:0}
  .tray{display:flex;align-items:center;padding-right:4px}
  .w{gap:5px;margin-right:16px}
  .tray .i{width:20px}
  .lang{font-size:9px;margin:0 14px 0 6px}
  .clock{font:9px/15px "Open Sans",sans-serif;text-align:center;display:block}
  .note{width:45px;border-right:1px solid #555;height:100%}`,
  `<div class="apps"><button class="s" aria-label="Inicio">${ic('windows', 17)}</button><button class="s" aria-label="Buscar">${ic('search', 14, 1.3)}</button><button class="s" aria-label="Vista de tareas">${ic('taskview', 15)}</button><button class="edge" aria-label="Edge">${ic('edge', 20)}</button><button class="run" aria-label="Explorador">${ic('explorer', 19)}</button><button class="run" aria-label="Excel">${ic('excel', 20)}</button><button class="run on" aria-label="Firefox">${ic('firefox', 20)}</button><button class="run" aria-label="Transferencia">${ic('transfer', 20)}</button><button class="run" aria-label="Bloc de notas">${ic('notepad', 19)}</button><button class="run" aria-label="Acrobat">${ic('acrobat', 20)}</button></div>
  <div class="tray"><button class="w">${ic('weather', 21)}<span>25°C</span><span>Parc. soleado</span></button><button class="i" aria-label="Iconos ocultos">${ic('up', 11, 1)}</button><button class="i" aria-label="OneDrive">${ic('onedrive', 15)}</button><button class="i" aria-label="Sincronización">${ic('sync', 14)}</button><button class="i" aria-label="Red">${ic('wifi', 13)}</button><button class="i" aria-label="Volumen">${ic('mute', 14)}</button><button class="lang">ESP</button><button class="clock">9:58 a. m.<br>25/04/2023</button><button class="note" aria-label="Notificaciones">${ic('note', 15)}</button></div>`);

/* Page frame */
define('desktop-shell', `
  :host{display:grid;grid-template-columns:minmax(0,1fr);grid-template-rows:auto auto auto minmax(0,1fr) auto;height:100vh;overflow:hidden}
  .work{display:grid;grid-template-columns:auto minmax(0,1fr);min-height:0}
  .main{display:grid;grid-template-columns:minmax(0,1fr);grid-template-rows:auto minmax(0,1fr);min-height:0;background:#fafafa}
  .panes{display:grid;grid-template-columns:315px minmax(0,1fr);min-height:0}
  ::slotted([slot=folders]),::slotted([slot=reading]){min-height:0}`,
  `<slot name="tabs"></slot><slot name="toolbar"></slot><slot name="header"></slot>
  <div class="work"><slot name="rail"></slot><div class="main"><slot name="ribbon"></slot><div class="panes"><slot name="folders"></slot><slot name="reading"></slot></div></div></div>
  <slot name="taskbar"></slot>`);
</script>
</body>
</html>
